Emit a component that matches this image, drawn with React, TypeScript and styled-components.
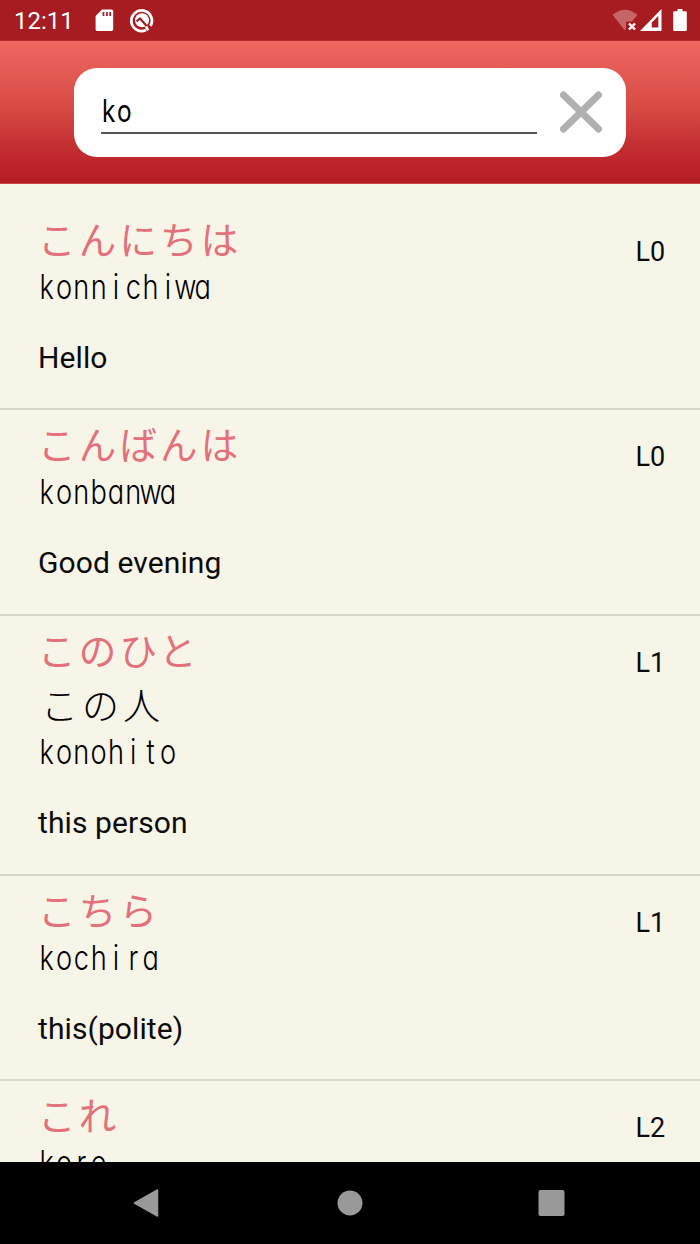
import React from "react";
import styled, { createGlobalStyle } from "styled-components";

const GlobalStyle = createGlobalStyle`
  * { box-sizing: border-box; }
  html, body { margin: 0; padding: 0; background: #000; }
`;

const Screen = styled.div`
  display: flex;
  flex-direction: column;
  width: 700px;
  height: 1244px;
  overflow: hidden;
  background: #f7f4e8;
  font-family: Roboto, "Noto Sans CJK JP", sans-serif;
  color: #0b0b0b;
`;

const StatusBar = styled.header`
  display: flex;
  align-items: center;
  flex: 0 0 41px;
  padding: 0 12px 0 14px;
  background: #a61c21;
  border-bottom: 1px solid #b3292c;
  color: #fff;
`;

const Clock = styled.span`
  width: 80px;
  padding-top: 3px;
  font-size: 24px;
  line-height: 37px;
`;

const StatusGroup = styled.div<{ $end?: boolean }>`
  display: flex;
  margin-left: ${(p) => (p.$end ? "auto" : "0")};
  svg { display: block; }
`;

const SearchHeader = styled.div`
  display: flex;
  justify-content: center;
  flex: 0 0 143px;
  padding-top: 27px;
  background: linear-gradient(#ef6762 0%, #e55b55 20%, #d54a43 48%, #c32e31 75%, #b41c22 100%);
  border-bottom: 1px solid #c4474a;
`;

const SearchCard = styled.div`
  display: flex;
  align-items: flex-start;
  width: 552px;
  height: 89px;
  padding: 22px 23px 0 27px;
  border-radius: 23px;
  background: #fff;
`;

const SearchField = styled.div`
  width: 436px;
  height: 44px;
  border-bottom: 2px solid #555;
`;

const ClearButton = styled.button`
  margin: 0 0 0 22px;
  padding: 0;
  border: 0;
  background: none;
  svg { display: block; }
`;

const RomajiLine = styled.div<{ $size: number; $weight: number }>`
  display: flex;
  width: fit-content;
  height: 45px;
  font-family: Inter, sans-serif;
  font-feature-settings: "cv11";
  font-size: ${(p) => p.$size}px;
  font-weight: ${(p) => p.$weight};
  line-height: 41px;
  color: #000;
  transform: scaleX(0.8);
  transform-origin: left;
`;

const Letter = styled.span`
  display: flex;
  justify-content: center;
  width: 0.637em;
`;

const WordList = styled.main`
  flex: 1 1 0;
  min-height: 0;
  overflow: hidden;
  padding-top: 20.5px;
`;

const WordRow = styled.article`
  display: flex;
  justify-content: space-between;
  padding: 9px 35.5px 32.5px 38px;
  border-bottom: 2px solid #d9d6ca;
`;

const Kana = styled.div`
  height: 52px;
  font-family: "Noto Sans CJK JP", sans-serif;
  font-weight: 400;
  font-size: 37.5px;
  line-height: 48px;
  letter-spacing: 3.2px;
  color: #e3707a;
`;

const Kanji = styled(Kana)`
  height: 54.5px;
  font-weight: 200;
  font-size: 37px;
  line-height: 54px;
  letter-spacing: 4px;
  padding-left: 3px;
  color: #000;
`;

const Meaning = styled.div`
  margin-top: 29px;
  height: 36px;
  font-size: 30px;
  line-height: 36px;
  letter-spacing: 0.1px;
`;

const Level = styled.div`
  padding-top: 21px;
  width: 29px;
  font-size: 27px;
  line-height: 34px;
  white-space: nowrap;
`;

const NavBar = styled.nav`
  display: flex;
  justify-content: center;
  align-items: center;
  flex: 0 0 82px;
  background: #000;
  svg { display: block; }
`;

interface Word {
  kana: string;
  kanji?: string;
  romaji: string;
  meaning?: string;
  level: string;
}

const words: Word[] = [
  { kana: "こんにちは", romaji: "konnichiwa", meaning: "Hello", level: "L0" },
  { kana: "こんばんは", romaji: "konbanwa", meaning: "Good evening", level: "L0" },
  { kana: "このひと", kanji: "この人", romaji: "konohito", meaning: "this person", level: "L1" },
  { kana: "こちら", romaji: "kochira", meaning: "this(polite)", level: "L1" },
  { kana: "これ", romaji: "kore", level: "L2" },
];

// Sets each letter in a cell of equal width, like a handwriting practice grid.
function Romaji({ text, size = 34, weight = 300 }: { text: string; size?: number; weight?: number }) {
  return (
    <RomajiLine $size={size} $weight={weight}>
      {text.split("").map((c, i) => (
        <Letter key={i}>{c}</Letter>
      ))}
    </RomajiLine>
  );
}

export default function App() {
  return (
    <>
      <GlobalStyle />
      <Screen>
        <StatusBar>
          <Clock>12:11</Clock>
          <StatusGroup>
            <svg width="64" height="40" viewBox="94 0 64 40">
              <path d="M102 9.500h9.500q1.700 0 1.700 1.700v18q0 1.700-1.700 1.700H97.300q-1.700 0-1.700-1.700V16z" fill="#fff" />
              <path d="M103.500 12v4M107 12v4M110.200 12v4" stroke="#a61c21" strokeWidth="1.700" />
              <path d="M146 30.100A10.300 10.300 0 1 1 150.500 26" fill="none" stroke="#fff" strokeWidth="2.800" />
              <circle cx="142" cy="20.300" r="7" fill="#fff" />
              <path d="M136.500 21.500l3.500-3 8.500 9.500" fill="none" stroke="#a61c21" strokeWidth="2.200" />
              <path d="M146 26.500l2.200 3.800" stroke="#fff" strokeWidth="2.500" />
            </svg>
          </StatusGroup>
          <StatusGroup $end>
            <svg width="76" height="40" viewBox="612 0 76 40">
              <path d="M612.500 14.800Q625 4.500 637.500 14.800L632 21.500H626V29.500L624.500 30z" fill="#c66568" />
              <path d="M629 23.500l6 6M635 23.500l-6 6" stroke="#fff" strokeWidth="2.400" />
              <path d="M661.500 9v22H640z" fill="#fff" />
              <path d="M658.300 16v11.600h-6.500v-5.100z" fill="#a61c21" />
              <path d="M677.500 9h5v2.200h3q1.300 0 1.300 1.300v17.200q0 1.300-1.300 1.300h-11q-1.300 0-1.300-1.300V12.500q0-1.300 1.300-1.300h3z" fill="#fff" />
            </svg>
          </StatusGroup>
        </StatusBar>
        <SearchHeader>
          <SearchCard>
            <SearchField>
              <Romaji text="ko" size={30.5} weight={400} />
            </SearchField>
            <ClearButton aria-label="Clear">
              <svg width="44" height="44" viewBox="0 0 44 44">
                <path d="M4.500 5l35 34M39.500 5l-35 34" stroke="#b0b0b0" strokeWidth="7" strokeLinecap="round" />
              </svg>
            </ClearButton>
          </SearchCard>
        </SearchHeader>
        <WordList>
          {words.map((w) => (
            <WordRow key={w.kana}>
              <div>
                <Kana>{w.kana}</Kana>
                {w.kanji && <Kanji>{w.kanji}</Kanji>}
                <Romaji text={w.romaji} />
                {w.meaning && <Meaning>{w.meaning}</Meaning>}
              </div>
              <Level>{w.level}</Level>
            </WordRow>
          ))}
        </WordList>
        <NavBar>
          <svg width="434" height="30" viewBox="133 1188 434 30">
            <path d="M157.500 1190v26L134.500 1203z" fill="#999" stroke="#999" strokeWidth="1.500" strokeLinejoin="round" />
            <circle cx="350" cy="1203" r="12.500" fill="#999" />
            <rect x="538.500" y="1190" width="26" height="26" rx="2" fill="#999" />
          </svg>
        </NavBar>
      </Screen>
    </>
  );
}
